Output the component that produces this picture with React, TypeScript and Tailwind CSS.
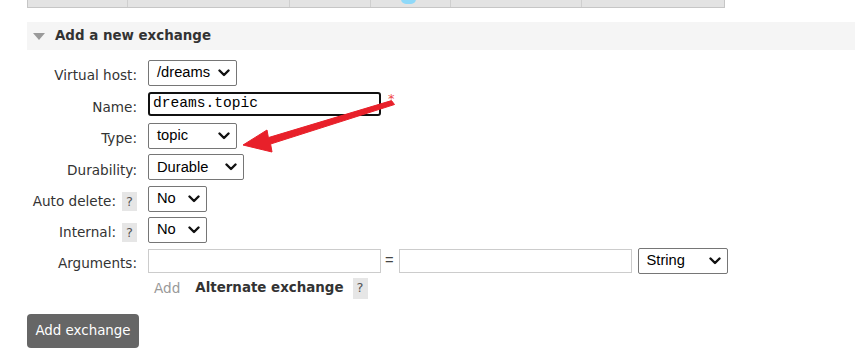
import React from "react";

const Chevron = () => (
  <svg width="12" height="8" viewBox="0 0 12 8" className="shrink-0">
    <path d="M1.5 1.5 L6 6 L10.5 1.5" fill="none" stroke="#111" strokeWidth="2.4" strokeLinecap="round" strokeLinejoin="round" />
  </svg>
);

const Select = ({ text, w }: { text: string; w: string }) => (
  <div
    className={`${w} h-[26px] flex items-center justify-between pl-[8px] pr-[6px] border border-[#767676] rounded-[2px] bg-white text-[14.7px] text-black`}
    style={{ fontFamily: '"Liberation Sans", Arial, sans-serif' }}
  >
    <span>{text}</span>
    <Chevron />
  </div>
);

const Help = ({ big }: { big?: boolean }) => (
  <span className={`inline-flex items-center justify-center w-[15px] ${big ? "h-[21px]" : "h-[19px]"} bg-[#e6e6e6] text-[#555] text-[13px]`}>?</span>
);

const Row = ({ label, help, h, children }: { label: string; help?: boolean; h: string; children: React.ReactNode }) => (
  <div className={`flex items-center ${h}`}>
    <div className="w-[137px] shrink-0 flex justify-end items-center gap-[6px] pt-[6px] text-[13.6px] text-[#333]">
      <span>{label}</span>
      {help && <Help />}
    </div>
    <div className="ml-[11px] flex items-center">{children}</div>
  </div>
);

export default function App() {
  return (
    <div
      className="relative w-[855px] h-[355px] bg-white overflow-hidden"
      style={{ fontFamily: '"DejaVu Sans", Verdana, sans-serif' }}
    >
      {/* top tab bar */}
      <div className="ml-[27px] w-[698px] h-[8px] flex border-x border-b border-[#c6c6c6] bg-[#e3e3e3]">
        <div className="w-[100px] border-r border-[#cfcfcf]" />
        <div className="w-[162px] border-r border-[#cfcfcf]" />
        <div className="w-[81px] border-r border-[#cfcfcf]" />
        <div className="w-[80px] border-r border-[#cfcfcf] flex justify-center overflow-hidden">
          <div className="w-[15px] h-[10px] -mt-[6px] ml-[-4px] rounded-full bg-[#8fd9f9]" />
        </div>
        <div className="w-[131px] border-r border-[#cfcfcf]" />
        <div className="flex-1" />
      </div>

      {/* section header */}
      <div className="mt-[14px] ml-[27px] h-[28px] bg-[#f5f5f5] flex items-center">
        <svg width="12" height="8" viewBox="0 0 12 8" className="ml-[6px]">
          <polygon points="0,1 12,1 6,8" fill="#9a9a9a" />
        </svg>
        <span className="ml-[10px] text-[13.4px] font-bold text-[#333]">Add a new exchange</span>
      </div>

      {/* form */}
      <div className="mt-[7px] flex flex-col">
        <Row label="Virtual host:" h="h-[31px]">
          <Select text="/dreams" w="w-[89px]" />
        </Row>
        <Row label="Name:" h="h-[32px]">
          <div
            className="w-[233px] h-[24px] border-2 border-[#111] rounded-[3px] flex items-center pl-[3px] text-[14.6px] text-black"
            style={{ fontFamily: '"Liberation Mono", "Courier New", monospace' }}
          >
            dreams.topic
          </div>
          <span className="ml-[7px] -mt-[10px] text-[13px] text-[#f04848]">*</span>
        </Row>
        <Row label="Type:" h="h-[31px]">
          <Select text="topic" w="w-[89px]" />
        </Row>
        <Row label="Durability:" h="h-[32px]">
          <Select text="Durable" w="w-[96px]" />
        </Row>
        <Row label="Auto delete:" help h="h-[31px]">
          <Select text="No" w="w-[59px]" />
        </Row>
        <Row label="Internal:" help h="h-[31px]">
          <Select text="No" w="w-[59px]" />
        </Row>
        <Row label="Arguments:" h="h-[31px]">
          <div className="w-[233px] h-[24px] border border-[#cccccc]" />
          <span
            className="ml-[4px] mr-[5px] text-[14.7px] text-[#444]"
            style={{ fontFamily: '"Liberation Sans", Arial, sans-serif' }}
          >
            =
          </span>
          <div className="w-[233px] h-[24px] border border-[#cccccc]" />
          <div className="ml-[6px]">
            <Select text="String" w="w-[90px]" />
          </div>
        </Row>
        <div className="flex items-center h-[24px]">
          <div className="ml-[154px] text-[13.6px] text-[#999]">Add</div>
          <div className="ml-[15px] text-[13.4px] font-bold text-[#333]">Alternate exchange</div>
          <div className="ml-[9px] flex items-center"><Help big /></div>
        </div>
      </div>

      <button className="mt-[14px] ml-[27px] w-[112px] h-[34px] rounded-[4px] bg-[#666666] text-white text-[13.4px]">
        Add exchange
      </button>

      {/* red arrow annotation */}
      <svg className="absolute left-0 top-0 pointer-events-none" width="855" height="355">
        <polygon
          points="391.5,100.6 394.5,104.5 270.6,144 272,152 243,145 267,130 268.4,137.6"
          fill="#e8202a"
          stroke="#e8202a"
          strokeWidth="1"
          strokeLinejoin="round"
        />
      </svg>
    </div>
  );
}
